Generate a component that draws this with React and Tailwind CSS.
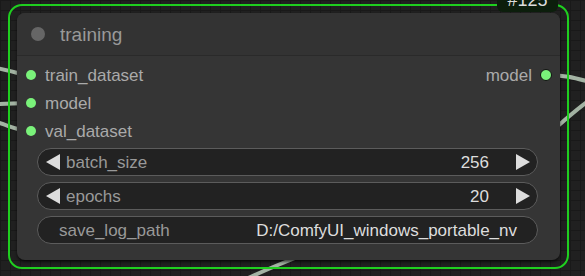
import React from "react";

const font = { fontFamily: '"Liberation Sans", Arial, sans-serif' };

function InputSlot({ label }) {
  return (
    <div className="flex items-center h-[28px] pl-[9px]">
      <div className="w-[10px] h-[10px] rounded-full bg-[#7af27a]" />
      <span className="ml-[9px] text-[17px] text-[#aaaaaa] leading-none">{label}</span>
    </div>
  );
}

function Arrow({ dir }) {
  return (
    <svg width="14" height="16" viewBox="0 0 14 16" className="shrink-0">
      <path d={dir === "left" ? "M14 0 L14 16 L0 8 Z" : "M0 0 L0 16 L14 8 Z"} fill="#dddddd" />
    </svg>
  );
}

function NumberWidget({ label, value }) {
  return (
    <div className="flex items-center h-[28px] rounded-full bg-[#222222] border border-[#5c5c5c] pl-[8px] pr-[7px] text-[17px] leading-none">
      <Arrow dir="left" />
      <span className="ml-[6px] text-[#999999]">{label}</span>
      <span className="ml-auto text-[#dddddd]">{value}</span>
      <span className="ml-[27px]" />
      <Arrow dir="right" />
    </div>
  );
}

function TextWidget({ label, value }) {
  return (
    <div className="flex items-center h-[28px] rounded-full bg-[#222222] border border-[#5c5c5c] pl-[21px] pr-[20px] text-[17px] leading-none">
      <span className="text-[#999999]">{label}</span>
      <span className="ml-auto text-[#dddddd] whitespace-nowrap">{value}</span>
    </div>
  );
}

export default function App() {
  return (
    <div
      className="relative w-[585px] h-[276px] overflow-hidden bg-[#202020] bg-[linear-gradient(#191919_1px,transparent_1px),linear-gradient(90deg,#191919_1px,transparent_1px)] bg-[size:10px_10px]"
      style={font}
    >
      {/* links behind the node */}
      <svg className="absolute inset-0" width="585" height="276">
        <g fill="none" stroke="#a3b3a3" strokeWidth="4">
          <path d="M-4 68 C10 70, 16 74, 30 75" />
          <path d="M-4 104 C10 104, 16 103, 30 103" />
          <path d="M-4 122 C10 126, 16 130, 30 131" />
          <path d="M546 75 C565 75, 575 78, 590 82" />
          <path d="M540 142 C558 126, 575 110, 590 100" />
          <path d="M240 282 C260 272, 285 262, 300 256" />
        </g>
      </svg>

      <div className="relative pt-[4px] pl-[8px]">
        {/* selection outline */}
        <div className="w-[561px] h-[265px] rounded-[14px] border-2 border-[#1fcf1f] p-[7px]">
          <div className="w-[543px] h-[247px] rounded-[8px] bg-[#353535] shadow-[0_2px_3px_rgba(0,0,0,0.6)] flex flex-col overflow-hidden">
            {/* title */}
            <div className="h-[43px] shrink-0 flex items-center pl-[14px] bg-[#333333] border-b border-[#2a2a2a]">
              <div className="w-[14px] h-[14px] rounded-full bg-[#666666]" />
              <span className="ml-[15px] text-[19px] text-[#999999] leading-none">training</span>
            </div>

            {/* slots */}
            <div className="flex pt-[5px]">
              <div className="flex flex-col">
                <InputSlot label="train_dataset" />
                <InputSlot label="model" />
                <InputSlot label="val_dataset" />
              </div>
              <div className="ml-auto flex items-center h-[28px] pr-[8px]">
                <span className="text-[17px] text-[#aaaaaa] leading-none">model</span>
                <div className="ml-[8px] w-[12px] h-[12px] rounded-full bg-[#7af27a] border border-[#111111]" />
              </div>
            </div>

            {/* widgets */}
            <div className="flex flex-col gap-[6px] mt-[3px] ml-[20px] mr-[22px]">
              <NumberWidget label="batch_size" value="256" />
              <NumberWidget label="epochs" value="20" />
              <TextWidget label="save_log_path" value="D:/ComfyUI_windows_portable_nv" />
            </div>
          </div>
        </div>
      </div>

      {/* node id badge */}
      <div className="absolute left-[497px] top-0 w-[61px] h-[12px] rounded-b-[6px] bg-[#0c1e0c] overflow-hidden flex justify-center">
        <span className="text-[18px] leading-none text-[#dddddd] -mt-[9px]">#125</span>
      </div>
    </div>
  );
}
